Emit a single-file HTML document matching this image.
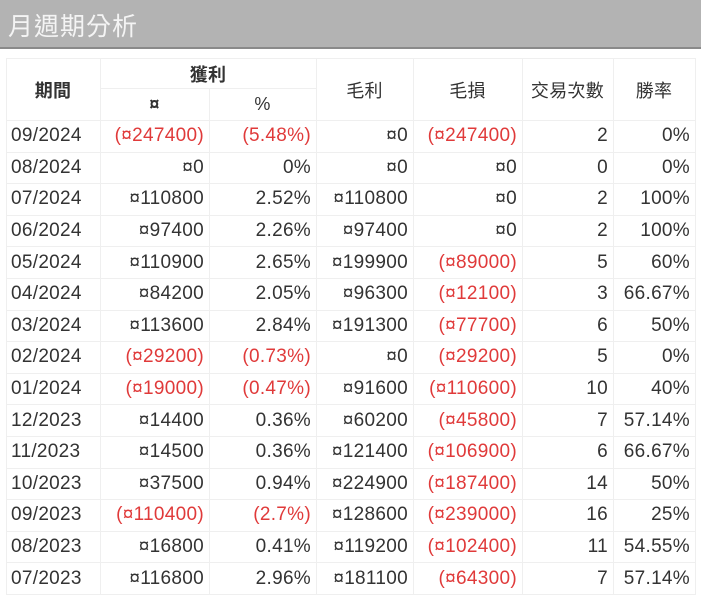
<!DOCTYPE html>
<html><head><meta charset="utf-8"><style>
body{margin:0;width:701px;height:598px;overflow:hidden;background:#fff;font-family:"Liberation Sans","Noto Sans CJK TC",sans-serif;}
.bar{position:absolute;left:0;top:0;width:701px;height:47px;background:#b3b3b3;border-bottom:2px solid #8a8a8a;}
.bar span{position:absolute;left:8px;top:7px;font-size:25px;color:#f4f4f4;letter-spacing:1px;}
table{position:absolute;left:6px;top:58px;border-collapse:collapse;table-layout:fixed;}
td,th{border:1px solid #efefef;padding:0 5px 0 4px;font-size:19px;color:#333;white-space:nowrap;letter-spacing:0.3px;}
th{font-weight:normal;font-size:18px;text-align:center;color:#333;}
th.b{font-weight:bold;}
td{text-align:right;height:30.6px;}
td:first-child{text-align:left;padding-left:4px;}
.r{color:#e03a3a;}
</style></head><body>
<div class="bar"><span>月週期分析</span></div>
<table>
<colgroup><col style="width:94px"><col style="width:109px"><col style="width:107px"><col style="width:97px"><col style="width:109px"><col style="width:91px"><col style="width:82px"></colgroup>
<tr style="height:30px"><th rowspan="2" class="b">期間</th><th colspan="2" class="b">獲利</th><th rowspan="2">毛利</th><th rowspan="2">毛損</th><th rowspan="2">交易次數</th><th rowspan="2">勝率</th></tr>
<tr style="height:32px"><th class="b">¤</th><th>%</th></tr>
<tr><td>09/2024</td><td class="r">(¤247400)</td><td class="r">(5.48%)</td><td>¤0</td><td class="r">(¤247400)</td><td>2</td><td>0%</td></tr>
<tr><td>08/2024</td><td>¤0</td><td>0%</td><td>¤0</td><td>¤0</td><td>0</td><td>0%</td></tr>
<tr><td>07/2024</td><td>¤110800</td><td>2.52%</td><td>¤110800</td><td>¤0</td><td>2</td><td>100%</td></tr>
<tr><td>06/2024</td><td>¤97400</td><td>2.26%</td><td>¤97400</td><td>¤0</td><td>2</td><td>100%</td></tr>
<tr><td>05/2024</td><td>¤110900</td><td>2.65%</td><td>¤199900</td><td class="r">(¤89000)</td><td>5</td><td>60%</td></tr>
<tr><td>04/2024</td><td>¤84200</td><td>2.05%</td><td>¤96300</td><td class="r">(¤12100)</td><td>3</td><td>66.67%</td></tr>
<tr><td>03/2024</td><td>¤113600</td><td>2.84%</td><td>¤191300</td><td class="r">(¤77700)</td><td>6</td><td>50%</td></tr>
<tr><td>02/2024</td><td class="r">(¤29200)</td><td class="r">(0.73%)</td><td>¤0</td><td class="r">(¤29200)</td><td>5</td><td>0%</td></tr>
<tr><td>01/2024</td><td class="r">(¤19000)</td><td class="r">(0.47%)</td><td>¤91600</td><td class="r">(¤110600)</td><td>10</td><td>40%</td></tr>
<tr><td>12/2023</td><td>¤14400</td><td>0.36%</td><td>¤60200</td><td class="r">(¤45800)</td><td>7</td><td>57.14%</td></tr>
<tr><td>11/2023</td><td>¤14500</td><td>0.36%</td><td>¤121400</td><td class="r">(¤106900)</td><td>6</td><td>66.67%</td></tr>
<tr><td>10/2023</td><td>¤37500</td><td>0.94%</td><td>¤224900</td><td class="r">(¤187400)</td><td>14</td><td>50%</td></tr>
<tr><td>09/2023</td><td class="r">(¤110400)</td><td class="r">(2.7%)</td><td>¤128600</td><td class="r">(¤239000)</td><td>16</td><td>25%</td></tr>
<tr><td>08/2023</td><td>¤16800</td><td>0.41%</td><td>¤119200</td><td class="r">(¤102400)</td><td>11</td><td>54.55%</td></tr>
<tr><td>07/2023</td><td>¤116800</td><td>2.96%</td><td>¤181100</td><td class="r">(¤64300)</td><td>7</td><td>57.14%</td></tr>
</table>
</body></html>
